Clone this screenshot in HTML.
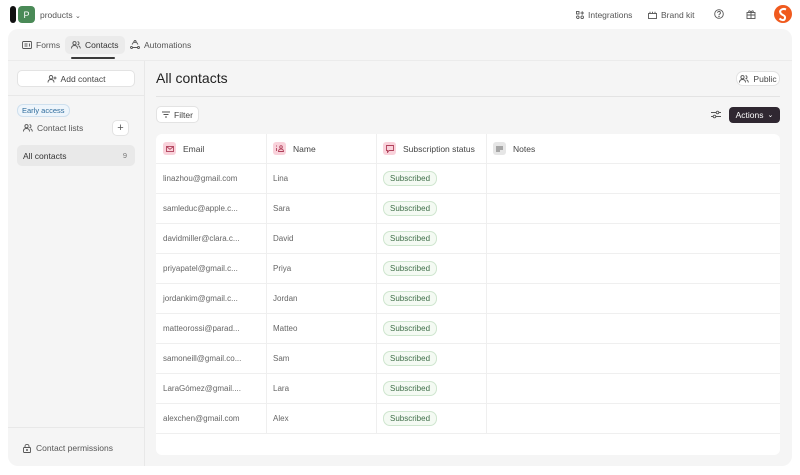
<!DOCTYPE html>
<html><head><meta charset="utf-8"><style>
*{box-sizing:border-box;margin:0;padding:0}
body{width:800px;height:475px;background:#fff;font-family:"Liberation Sans",sans-serif;color:#333;position:relative;overflow:hidden;font-size:8.5px}
.abs{position:absolute}
svg{display:block}
.main{left:8px;top:29px;width:784px;height:437px;background:#f5f5f5;border-radius:10px}
.tab{top:36px;height:18px;display:flex;align-items:center;gap:4px;font-size:8.5px;color:#555;padding:0 6px;border-radius:5px}
.btn{background:#fff;border:1px solid #e3e3e3;border-radius:5px;display:flex;align-items:center;justify-content:center;gap:4px;font-size:8.5px;color:#444}
.card{left:156px;top:134px;width:624px;height:321px;background:#fff;border-radius:6px;overflow:hidden}
.row{position:absolute;left:0;width:624px;height:30px;border-bottom:1px solid #efefef;display:flex;align-items:center;font-size:8px;color:#666}
.c1{position:absolute;left:7px}.c2{position:absolute;left:117px}.c3{position:absolute;left:227px}
.vl{position:absolute;top:0;width:1px;height:300px;background:#efefef}
.pill{border:1px solid #cfe6cf;background:#f4faf3;color:#3f6e48;border-radius:7px;padding:2px 6px;font-size:8px}
.hi{width:13px;height:13px;border-radius:3px;background:#f9d2db;display:inline-flex;align-items:center;justify-content:center;margin-right:7px}
</style></head><body>
<div class="abs" style="left:10px;top:6px;width:6px;height:17px;background:#111;border-radius:3px"></div>
<div class="abs" style="left:18px;top:6px;width:17px;height:17px;background:#4a8a57;border-radius:4px;color:#fff;font-size:9px;display:flex;align-items:center;justify-content:center">P</div>
<div class="abs" style="left:40px;top:10px;font-size:8.5px;color:#555">products <span style="font-size:7px">&#8964;</span></div>

<div class="abs" style="left:576px;top:10px;font-size:8.5px;color:#555;display:flex;gap:4px;align-items:center"><svg width="8" height="8" viewBox="0 0 8 8" fill="none" stroke="#555" stroke-width=".9"><rect x=".5" y=".5" width="2.5" height="2.5"/><circle cx="1.8" cy="6.2" r="1.3"/><circle cx="6.2" cy="6.2" r="1.3"/><path d="M6.2 .3v3.4M4.5 2h3.4"/></svg>Integrations</div>
<div class="abs" style="left:648px;top:10px;font-size:8.5px;color:#555;display:flex;gap:4px;align-items:center"><svg width="9" height="8" viewBox="0 0 9 8" fill="none" stroke="#555" stroke-width=".9"><rect x=".5" y="2.5" width="8" height="5"/><path d="M2 2.5V.7M4.5 2.5V.7M7 2.5V.7"/></svg>Brand kit</div>
<div class="abs" style="left:714px;top:9px"><svg width="10" height="10" viewBox="0 0 10 10" fill="none" stroke="#555" stroke-width=".9"><circle cx="5" cy="5" r="4.3"/><path d="M3.6 3.8a1.4 1.4 0 1 1 1.9 1.3c-.4.2-.5.5-.5.9"/><circle cx="5" cy="7.4" r=".3" fill="#555"/></svg></div>
<div class="abs" style="left:746px;top:9px"><svg width="10" height="10" viewBox="0 0 10 10" fill="none" stroke="#555" stroke-width=".9"><rect x="1" y="3.5" width="8" height="6"/><path d="M1 6h8M5 3.5v6M5 3.5C4 1 2 1.5 3 3.5M5 3.5C6 1 8 1.5 7 3.5"/></svg></div>
<div class="abs" style="left:774px;top:5px;width:18px;height:18px;border-radius:50%;background:#f05a1e"><svg width="18" height="18" viewBox="0 0 18 18" fill="none" stroke="#fff" stroke-width="2"><path d="M12 4.5C9 3 5 5 6.5 8s5 1.5 4.5 5-4 2-5.5 .5"/></svg></div>

<div class="abs main"></div>
<div class="abs" style="left:8px;top:60px;width:784px;height:1px;background:#ebebeb"></div>
<div class="abs tab" style="left:16px"><svg width="10" height="8" viewBox="0 0 10 8" fill="none" stroke="#555" stroke-width=".9"><rect x=".5" y=".5" width="9" height="7" rx="1"/><path d="M2.5 3h3M2.5 5h3M7.5 2.5v3"/></svg>Forms</div>
<div class="abs tab" style="left:65px;background:#ebebeb;color:#333"><svg width="10" height="8" viewBox="0 0 10 8" fill="none" stroke="#555" stroke-width=".9"><circle cx="3.5" cy="2.2" r="1.6"/><path d="M.5 7.5c0-2 1.3-3 3-3s3 1 3 3M6.5 .7a1.5 1.5 0 0 1 0 3M7.5 4.8c1 .4 1.8 1.2 1.8 2.7"/></svg>Contacts</div>
<div class="abs" style="left:71px;top:57px;width:44px;height:2px;background:#3a3a3a;border-radius:1px"></div>
<div class="abs tab" style="left:124px"><svg width="10" height="10" viewBox="0 0 10 10" fill="none" stroke="#555" stroke-width=".9"><path d="M4 1.5L2 4.5M6 1.5l2 3M2 7.5h6"/><circle cx="5" cy="1.5" r="1"/><circle cx="1.5" cy="7.5" r="1"/><circle cx="8.5" cy="7.5" r="1"/></svg>Automations</div>

<div class="abs" style="left:144px;top:61px;width:1px;height:405px;background:#e8e8e8"></div>
<div class="abs btn" style="left:17px;top:70px;width:118px;height:17px"><svg width="10" height="8" viewBox="0 0 10 8" fill="none" stroke="#555" stroke-width=".9"><circle cx="4" cy="2.2" r="1.7"/><path d="M1 7.5c0-2 1.3-3 3-3s3 1 3 3M8 1.5v3M6.5 3h3"/></svg>Add contact</div>
<div class="abs" style="left:8px;top:95px;width:136px;height:1px;background:#e8e8e8"></div>
<div class="abs" style="left:17px;top:104px;border:1px solid #cfe0ee;background:#eef5fb;color:#2f6c9c;border-radius:6px;padding:1px 4px;font-size:7.5px">Early access</div>
<div class="abs" style="left:23px;top:123px;display:flex;gap:4px;align-items:center;font-size:8.5px;color:#555"><svg width="10" height="8" viewBox="0 0 10 8" fill="none" stroke="#555" stroke-width=".9"><circle cx="3.5" cy="2.2" r="1.6"/><path d="M.5 7.5c0-2 1.3-3 3-3s3 1 3 3M6.5 .7a1.5 1.5 0 0 1 0 3M7.5 4.8c1 .4 1.8 1.2 1.8 2.7"/></svg>Contact lists</div>
<div class="abs btn" style="left:112px;top:120px;width:17px;height:16px;font-size:11px;color:#555">+</div>
<div class="abs" style="left:17px;top:145px;width:118px;height:21px;background:#e9e9e9;border-radius:5px;font-size:8.5px;color:#333;display:flex;align-items:center;justify-content:space-between;padding:0 8px 0 6px"><span>All contacts</span><span style="color:#777;font-size:7.5px">9</span></div>
<div class="abs" style="left:8px;top:427px;width:136px;height:1px;background:#e8e8e8"></div>
<div class="abs" style="left:23px;top:443px;display:flex;gap:5px;align-items:center;font-size:8.5px;color:#555"><svg width="8" height="9" viewBox="0 0 8 9" fill="none" stroke="#555" stroke-width=".9"><rect x=".5" y="3.5" width="7" height="5" rx=".8"/><path d="M2 3.5V2.3a2 2 0 0 1 4 0v1.2"/><circle cx="4" cy="6" r=".5" fill="#555"/></svg>Contact permissions</div>

<div class="abs" style="left:156px;top:70px;font-size:14px;color:#222">All contacts</div>
<div class="abs btn" style="left:736px;top:71px;width:44px;height:15px;border-radius:7px;font-size:8.5px"><svg width="10" height="8" viewBox="0 0 10 8" fill="none" stroke="#555" stroke-width=".9"><circle cx="3.5" cy="2.2" r="1.6"/><path d="M.5 7.5c0-2 1.3-3 3-3s3 1 3 3M6.5 .7a1.5 1.5 0 0 1 0 3M7.5 4.8c1 .4 1.8 1.2 1.8 2.7"/></svg>Public</div>
<div class="abs" style="left:156px;top:96px;width:624px;height:1px;background:#e3e3e3"></div>
<div class="abs btn" style="left:156px;top:106px;width:43px;height:17px;font-size:8.5px"><svg width="8" height="7" viewBox="0 0 8 7" fill="none" stroke="#555" stroke-width=".9"><path d="M0 1h8M1.5 3.5h5M3 6h2"/></svg>Filter</div>
<div class="abs" style="left:711px;top:110px"><svg width="10" height="9" viewBox="0 0 10 9" fill="none" stroke="#555" stroke-width=".9"><path d="M0 2.5h10M0 6.5h10"/><circle cx="6.5" cy="2.5" r="1.3" fill="#f5f5f5"/><circle cx="3.5" cy="6.5" r="1.3" fill="#f5f5f5"/></svg></div>
<div class="abs" style="left:729px;top:107px;width:51px;height:16px;background:#2f2731;border-radius:4px;color:#fff;font-size:8.5px;display:flex;align-items:center;justify-content:center;gap:4px">Actions <span style="font-size:7px">&#8964;</span></div>

<div class="abs card">
<div class="vl" style="left:110px"></div><div class="vl" style="left:220px"></div><div class="vl" style="left:330px"></div>
<div class="row" style="top:0;color:#444;font-size:8.5px">
<div class="c1" style="display:flex;align-items:center"><span class="hi"><svg width="8" height="6" viewBox="0 0 8 6" fill="none" stroke="#b0405a" stroke-width=".9"><rect x=".5" y=".5" width="7" height="5"/><path d="M.5 .5L4 3.3 7.5 .5"/></svg></span>Email</div>
<div class="c2" style="display:flex;align-items:center"><span class="hi"><svg width="8" height="7" viewBox="0 0 8 7" fill="none" stroke="#b0405a" stroke-width=".9"><path d="M.5 .5v1M.5 3v3"/><circle cx="5" cy="2" r="1.3"/><path d="M2.5 6.5c0-1.5 1-2.4 2.5-2.4s2.5.9 2.5 2.4z"/></svg></span>Name</div>
<div class="c3" style="display:flex;align-items:center"><span class="hi"><svg width="8" height="8" viewBox="0 0 8 8" fill="none" stroke="#b0405a" stroke-width=".9"><path d="M.5 .5h7v5H3L1.5 7.5V5.5h-1z"/></svg></span>Subscription status</div>
<div style="position:absolute;left:337px;display:flex;align-items:center"><span class="hi" style="background:#e6e6e6"><svg width="7" height="6" viewBox="0 0 7 6" fill="none" stroke="#666" stroke-width=".9"><path d="M0 1h7M0 3h7M0 5h4"/></svg></span>Notes</div>
</div>
<div class="row" style="top:30px"><span class="c1">linazhou@gmail.com</span><span class="c2">Lina</span><span class="c3 pill">Subscribed</span></div>
<div class="row" style="top:60px"><span class="c1">samleduc@apple.c...</span><span class="c2">Sara</span><span class="c3 pill">Subscribed</span></div>
<div class="row" style="top:90px"><span class="c1">davidmiller@clara.c...</span><span class="c2">David</span><span class="c3 pill">Subscribed</span></div>
<div class="row" style="top:120px"><span class="c1">priyapatel@gmail.c...</span><span class="c2">Priya</span><span class="c3 pill">Subscribed</span></div>
<div class="row" style="top:150px"><span class="c1">jordankim@gmail.c...</span><span class="c2">Jordan</span><span class="c3 pill">Subscribed</span></div>
<div class="row" style="top:180px"><span class="c1">matteorossi@parad...</span><span class="c2">Matteo</span><span class="c3 pill">Subscribed</span></div>
<div class="row" style="top:210px"><span class="c1">samoneill@gmail.co...</span><span class="c2">Sam</span><span class="c3 pill">Subscribed</span></div>
<div class="row" style="top:240px"><span class="c1">LaraGómez@gmail....</span><span class="c2">Lara</span><span class="c3 pill">Subscribed</span></div>
<div class="row" style="top:270px"><span class="c1">alexchen@gmail.com</span><span class="c2">Alex</span><span class="c3 pill">Subscribed</span></div>
</div>
</body></html>
